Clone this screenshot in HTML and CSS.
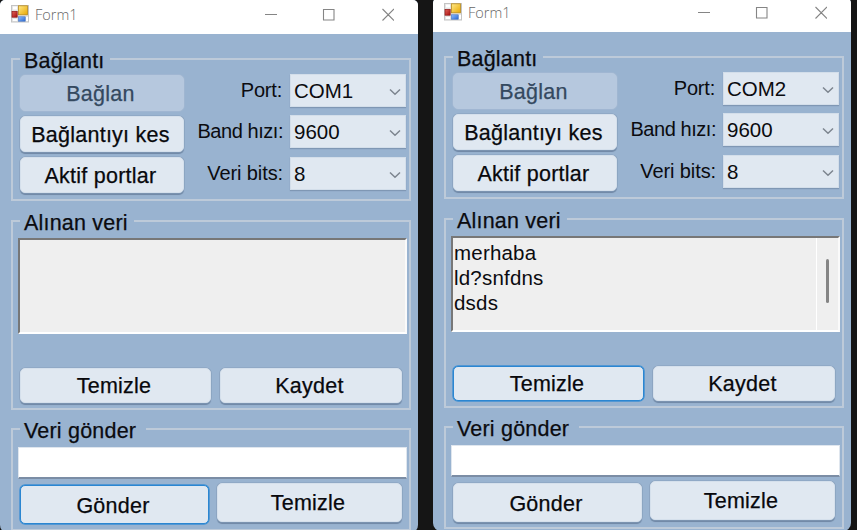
FILE: index.html
```html
<!DOCTYPE html>
<html lang="tr">
<head>
<meta charset="utf-8">
<title>Form1</title>
<link rel="stylesheet" href="styles.css">
</head>
<body>
<svg width="0" height="0" class="defs">
  <defs>
    <linearGradient id="gold" x1="0" y1="0" x2="1" y2="1"><stop offset="0" stop-color="#ffe98a"/><stop offset="1" stop-color="#e9a800"/></linearGradient>
    <linearGradient id="red" x1="0" y1="0" x2="1" y2="1"><stop offset="0" stop-color="#e0645a"/><stop offset="1" stop-color="#a80f0f"/></linearGradient>
    <linearGradient id="blue" x1="0" y1="0" x2="1" y2="1"><stop offset="0" stop-color="#8cbcff"/><stop offset="1" stop-color="#2c68d0"/></linearGradient>
    <symbol id="app" viewBox="0 0 18 18">
      <rect x=".5" y=".5" width="17" height="16.5" fill="#e4e4e4" stroke="#c4c4c4"/>
      <path d="M2 1.5h4v3H2zM2 14h4v2H2zM15 12h2v4h-2z" fill="#fff"/>
      <rect x="7.5" y=".8" width="9" height="9" fill="url(#gold)" stroke="#b98a1c" stroke-width=".8"/>
      <rect x="1" y="6.4" width="5.2" height="5.8" fill="url(#red)" stroke="#8f1616" stroke-width=".7"/>
      <rect x="7.6" y="11.8" width="6.6" height="4.4" fill="url(#blue)" stroke="#3d6fc0" stroke-width=".6"/>
    </symbol>
    <symbol id="controls" viewBox="0 0 130 14">
      <path d="M1 7.500h12M59.5 2.500h10.500v10.500h-10.500zM118.500 2l11.500 11.500M130 2l-11.500 11.500" fill="none" stroke="#858585" stroke-width="1.1"/>
    </symbol>
    <symbol id="chev" viewBox="0 0 12 8"><path d="M1 1.500l5 4.700 5-4.700" fill="none" stroke="#7d858f" stroke-width="1.500"/></symbol>
  </defs>
</svg>
<main class="desktop">
  <section class="window">
    <header class="titlebar">
      <svg class="app-icon"><use href="#app"/></svg>
      <span class="title">Form1</span>
      <svg class="controls"><use href="#controls"/></svg>
    </header>
    <div class="form">
      <fieldset class="group connection">
        <legend>Bağlantı</legend>
        <div class="connection-body">
          <div class="actions">
            <button class="btn" disabled>Bağlan</button>
            <button class="btn">Bağlantıyı kes</button>
            <button class="btn">Aktif portlar</button>
          </div>
          <div class="settings">
            <span class="label port">Port:</span><div class="combo"><span>COM1</span><svg><use href="#chev"/></svg></div>
            <span class="label">Band hızı:</span><div class="combo"><span>9600</span><svg><use href="#chev"/></svg></div>
            <span class="label bits">Veri bits:</span><div class="combo"><span>8</span><svg><use href="#chev"/></svg></div>
          </div>
        </div>
      </fieldset>
      <fieldset class="group received">
        <legend class="legend-received">Alınan veri</legend>
        <div class="log"></div>
        <div class="row">
          <button class="btn clear">Temizle</button>
          <button class="btn save">Kaydet</button>
        </div>
      </fieldset>
      <fieldset class="group sending">
        <legend class="legend-send">Veri gönder</legend>
        <div class="entry"></div>
        <div class="send-row">
          <button class="btn send focused">Gönder</button>
          <button class="btn wipe">Temizle</button>
        </div>
      </fieldset>
    </div>
  </section>
  <section class="window second">
    <header class="titlebar">
      <svg class="app-icon"><use href="#app"/></svg>
      <span class="title">Form1</span>
      <svg class="controls"><use href="#controls"/></svg>
    </header>
    <div class="form">
      <fieldset class="group connection">
        <legend>Bağlantı</legend>
        <div class="connection-body">
          <div class="actions">
            <button class="btn" disabled>Bağlan</button>
            <button class="btn">Bağlantıyı kes</button>
            <button class="btn">Aktif portlar</button>
          </div>
          <div class="settings">
            <span class="label port">Port:</span><div class="combo"><span>COM2</span><svg><use href="#chev"/></svg></div>
            <span class="label">Band hızı:</span><div class="combo"><span>9600</span><svg><use href="#chev"/></svg></div>
            <span class="label bits">Veri bits:</span><div class="combo"><span>8</span><svg><use href="#chev"/></svg></div>
          </div>
        </div>
      </fieldset>
      <fieldset class="group received">
        <legend class="legend-received">Alınan veri</legend>
        <div class="log">
          <div class="lines">merhaba<br>ld?snfdns<br>dsds</div>
          <div class="scroll"><div class="thumb"></div></div>
        </div>
        <div class="row">
          <button class="btn clear focused">Temizle</button>
          <button class="btn save">Kaydet</button>
        </div>
      </fieldset>
      <fieldset class="group sending">
        <legend class="legend-send">Veri gönder</legend>
        <div class="entry"></div>
        <div class="send-row">
          <button class="btn send">Gönder</button>
          <button class="btn wipe">Temizle</button>
        </div>
      </fieldset>
    </div>
  </section>
</main>
</body>
</html>
```
FILE: styles.css
```css
* { box-sizing: border-box; }
body {
  margin: 0;
  width: 857px;
  height: 530px;
  overflow: hidden;
  background: #151515;
  font-family: "Liberation Sans", Arial, sans-serif;
  font-size: 20.5px;
  color: #0b0b0f;
}
.defs { display: block; height: 0; }
.desktop { display: flex; gap: 15px; height: 530px; overflow: hidden; }
.window {
  flex: none;
  width: 418px;
  height: 533px;
  background: #99b3d0;
  border-radius: 5px 5px 8px 8px;
  overflow: hidden;
}
.second { margin-top: -2px; }
.titlebar {
  display: flex;
  height: 34px;
  background: #fff;
  padding: 5px 24px 0 11px;
}
.app-icon { width: 18px; height: 18px; flex: none; }
.title {
  margin-left: 6px;
  font: 300 14.5px/20px "Open Sans", sans-serif;
  color: #666;
}
.controls { width: 130px; height: 14px; margin-left: auto; margin-top: 2px; flex: none; }
.form {
  display: flex;
  flex-direction: column;
  padding: 13px 7px 0 11px;
}
.group {
  margin: 0;
  padding: 0;
  min-width: 0;
  border: 2px solid #bdcad9;
  position: relative;
}
legend {
  margin-left: 7px;
  padding: 2px 0 0 4px;
  width: 90px;
  height: 24px;
  line-height: 25px;
  font-size: 21.5px;
  letter-spacing: .2px;
  -webkit-text-stroke: .25px currentColor;
  white-space: nowrap;
}
.legend-received { width: 114px; }
.legend-send { width: 126px; }
.connection { height: 154px; }
.received { height: 201px; margin-top: 8px; }
.sending { height: 114px; margin-top: 7px; }
.connection-body { display: flex; justify-content: space-between; padding: 3px 3px 0 7px; }
.actions { display: flex; flex-direction: column; gap: 5px; width: 164px; padding-top: 1px; }
.btn {
  height: 36px;
  padding: 1px 3px 0 0;
  border: 1px solid #d5e0ec;
  border-radius: 5px;
  background: #e0e8f1;
  box-shadow: 0 0 0 .6px #879fbb, 0 1.300px .8px #6f87a5;
  font: inherit;
  font-size: 21.5px;
  line-height: 24px;
  letter-spacing: .25px;
  color: #08080c;
  -webkit-text-stroke: .25px currentColor;
}
.btn:disabled {
  background: #b6c8de;
  border-color: #b6c8de;
  box-shadow: 0 0 0 .7px #a3b8d2;
  color: #34495f;
}
.settings {
  display: grid;
  grid-template-columns: auto 116px;
  grid-auto-rows: 33px;
  gap: 8.300px 7px;
}
.label {
  text-align: right;
  line-height: 32px;
  letter-spacing: -.45px;
  font-size: 20px;
}
.port { padding-right: 1px; letter-spacing: -.2px; }
.bits { letter-spacing: -.1px; }
.combo {
  display: flex;
  align-items: center;
  justify-content: space-between;
  padding: 1px 4px 0 3px;
  background: #e0e8f1;
  border: 1px solid #d3deea;
  box-shadow: 0 1px 1px #7f97b4;
}
.combo svg { width: 12px; height: 8px; margin-top: 2px; }
.log {
  display: flex;
  justify-content: space-between;
  width: 389px;
  height: 96px;
  margin: 5px 0 0 5px;
  background: #efefef;
  border: 2px solid;
  border-color: #777 #fafafa #fff #777;
}
.lines { line-height: 25px; padding: 2px 0 0 1px; letter-spacing: .2px; }
.scroll {
  width: 22px;
  border-left: 1px solid #fff;
  padding: 21px 0 0 9px;
}
.thumb { width: 3px; height: 44px; border-radius: 2px; background: #858585; }
.row { display: flex; gap: 9px; padding: 33.500px 0 0 7px; }
.row .btn { height: 35px; }
.clear { width: 191px; }
.save { width: 182px; }
.entry {
  width: 389px;
  height: 32px;
  margin: 6px 0 0 5px;
  background: #fff;
  border: 1px solid #dfe6ee;
  border-bottom: 2px solid #7b8da5;
}
.send-row { display: flex; gap: 8px; padding: 4px 0 0 7px; align-items: flex-start; }
.send { width: 189px; height: 39px; margin-top: 2px; padding-top: 3px; }
.wipe { width: 185px; height: 39px; }
.btn.focused {
  border: 1px solid #2b86d1;
  box-shadow: 0 0 0 .7px #3c8fd4;
}
```
